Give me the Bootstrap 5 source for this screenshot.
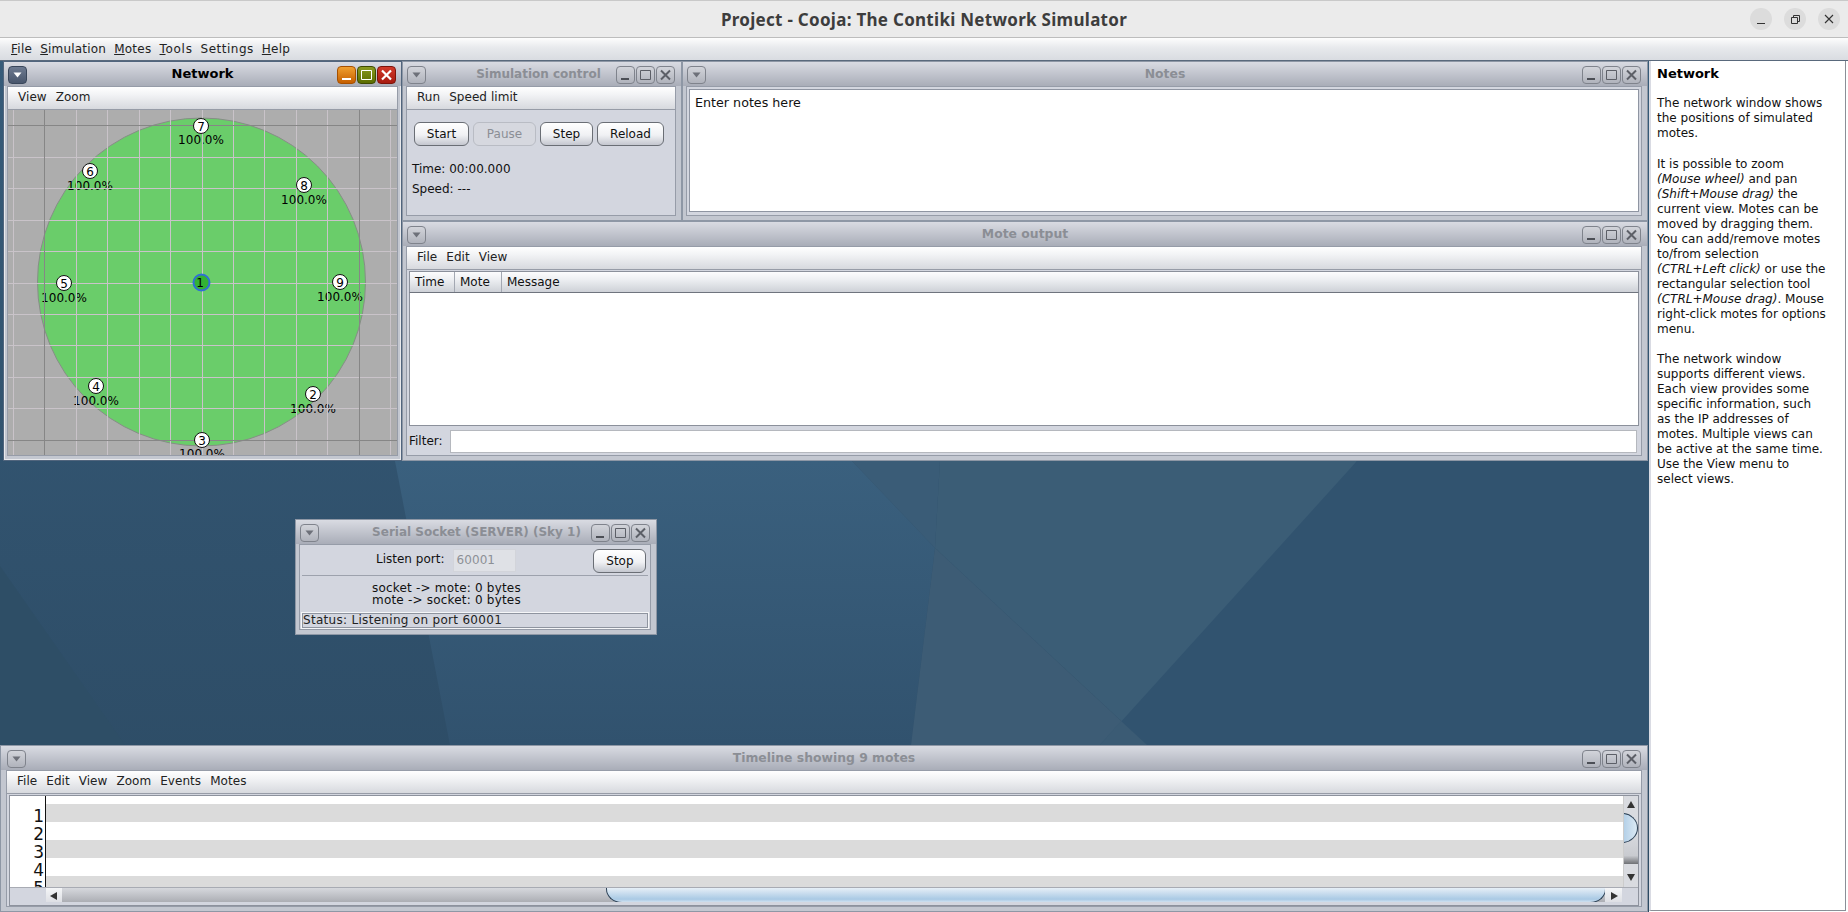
<!doctype html>
<html lang="en"><head><meta charset="utf-8"><title>Cooja</title>
<link href="https://cdn.jsdelivr.net/npm/bootstrap@5.3.0/dist/css/bootstrap.min.css" rel="stylesheet">
<style>
html,body{margin:0;width:1848px;height:912px;overflow:hidden}
body{font-family:"DejaVu Sans",sans-serif;font-size:12px;line-height:15px;color:#111;background:#fff}
.gtitle{height:38px;background:#ebebeb;border-top:1px solid #c9c9c9;border-bottom:1px solid #bdbdbd;position:relative}
.gtitle h1{margin:0;font:700 17px/38px "Noto Sans",sans-serif;color:#3d3d3d;text-align:center;letter-spacing:.28px}
.gctl{position:absolute;right:8px;top:7px;gap:12px}
.gbtn{width:22px;height:22px;border-radius:50%;background:#dcdcdc}
.gbtn svg{display:block}
.mainmenu{height:23px;background:linear-gradient(#fdfdfd,#e7e9ec 45%,#d9dce1);padding-left:11px;gap:8px;line-height:23px;border-bottom:1px solid #59697c;color:#222;letter-spacing:.27px}
.mainmenu span:nth-child(2){letter-spacing:.2px}
.mainmenu span:nth-child(4){letter-spacing:.7px}
.mainmenu span:nth-child(5){letter-spacing:.5px}
.workspace{height:851px}
.desk{width:1649px;height:851px;position:relative;overflow:hidden;background:#32546f;flex:none}
.wall{position:absolute;left:0;top:0}
.win{position:absolute;background:#c3c7d0;border:1px solid #8e97a5;padding:0 5px 4px 3px}
.win.active{border:1px solid #51657d;outline:1px solid #e8e9ec;outline-offset:-2px;padding-right:3px}
.tbar{height:24px;background:linear-gradient(#d9dbe2,#a9adb8);margin:0 -5px 0 -3px;padding:4px 6px 2px 4px;position:relative;flex:none}
.active .tbar{margin-right:-3px;padding-right:5px}
.ttext{position:absolute;left:0;right:0;top:4px;text-align:center;font-weight:700;color:#8b8e95;font-size:12.4px;line-height:16px;white-space:nowrap}
.active .ttext{color:#000;font-size:13px}
.ttext.tt-sim{left:-7px;font-size:12px}
.ttext.tt-sock{left:1px;font-size:12px}
.ibtn{width:19px;height:18px;border:1px solid #7f838c;border-radius:4px;background:linear-gradient(#d2d4da,#b0b3bc);flex:none}
.ibtn svg{display:block}
.ib-menu{background:linear-gradient(#6d7a90,#49566c);border-color:#39465a}
.ib-min{background:linear-gradient(#f0a030,#c65f00);border-color:#a65000}
.ib-max{background:linear-gradient(#8a9a20,#5b6d00);border-color:#3f4b00}
.ib-close{background:linear-gradient(#d23a2a,#a81b10);border-color:#7d130a}
.wbtns{gap:1px;position:relative}
.wbody{background:#d3d6df;border:1px solid #969ca8;min-height:0;flex:1 1 auto;overflow:hidden}
.submenu{height:23px;flex:none;background:linear-gradient(#fff,#f2f3f5 35%,#d7d9de);border-bottom:1px solid #979ca7;padding-left:10px;gap:9px;line-height:21px;color:#222;letter-spacing:.05px}
.ctlbtn{font-size:12px;line-height:15px;padding:3px 0;height:24px;border:1px solid #6a6e75;border-radius:6px;background:linear-gradient(#fff,#f0f1f4 55%,#c4c7cf);color:#111;flex:none;text-align:center}
.ctlbtn.off,.ctlbtn:disabled{border-color:#b9bcc4;background:#d6d8df;color:#8b8e95;opacity:1}
.b-start{width:55px}.b-pause{width:63px}.b-step{width:53px}.b-reload{width:67px}.b-stop{width:53px}
.ctlrow{padding:12px 0 0 7px;gap:4px}
.statgap{height:13px}
.stat{padding-left:5px;height:20px;line-height:20px}
.net{display:block;flex:none}
.net text{font-family:"DejaVu Sans",sans-serif;font-size:12px;fill:#000}
.notes{margin:2px 2px 3px;background:#fff;border:1px solid #8f95a2;padding:5px 5px;flex:1 1 auto;font-size:12.7px}
.tblhead{height:22px;flex:none;background:linear-gradient(#fcfcfd,#eceef1 40%,#ced1d7);border:1px solid #8b909b;border-bottom:1px solid #6f747e;margin:1px 2px 0 2px}
.tblhead span{padding:0 5px;border-right:1px solid #a3a8b2;line-height:20px}
.tblhead .c-time{width:45px}.tblhead .c-mote{width:47px}
.tblbody{background:#fff;flex:1 1 auto;margin:0 2px 0 2px;border:1px solid #8b909b;border-top:0}
.filter{height:29px;flex:none;padding:2px 0 0 2px;gap:7px}
.filter input{height:23px;width:1187px;border:1px solid #b5b8be;background:#fff;border-radius:0;padding:0;display:block}
.sockrow{height:31px;flex:none;border-bottom:1px solid #9da2ad;margin:0 2px;padding:4px 4px 0 0;white-space:nowrap}
.lbl{padding:3px 0 0 74px;flex:none}
.port{width:63px;height:23px;flex:none;background:#dfe1e6;border:1px solid #d2d4da;color:#8d9096;padding:3px 2px;margin:0 77px 0 9px;letter-spacing:.1px}
.sockinfo{line-height:11.5px;padding:7px 0 0 72px;height:36px;flex:none;letter-spacing:.2px}
.status{margin:0 1px;height:17px;border:1px solid #f5f6f8;outline:1px solid #8e949f;outline-offset:-2px;line-height:15px;color:#222;white-space:nowrap;padding-left:1px;letter-spacing:.3px}
.w-net{left:3px;top:0;width:399px;height:400px}
.w-sim{left:402px;top:0;width:280px;height:160px}
.w-notes{left:682px;top:0;width:966px;height:160px}
.w-out{left:402px;top:160px;width:1246px;height:240px}
.w-sock{left:295px;top:458px;width:362px;height:116px}
.w-time{left:0;top:684px;width:1648px;height:167px;padding-left:5px}
.w-time .tbar{margin-left:-5px;padding-left:6px}
.tlbody{margin:1px 2px 0 2px;border:1px solid #8d929d;background:#d3d6df;flex:1 1 auto;min-height:0}
.tllabels{width:36px;background:#fff;border-right:1px solid #111;text-align:right;font-size:17px;line-height:18px;height:91px;overflow:hidden;padding-top:11px;flex:none}
.tllabels div{padding-right:1px;color:#111}
.tlrows{width:1577px;height:91px;background:#fff;padding-top:8px;overflow:hidden;flex:none}
.stripe{height:18px;background:#dbdbdb}
.stripe.w{background:#fff}
.vsb{width:15px;height:91px;background:#d9dbe0;position:relative;flex:none;overflow:hidden;border-left:1px solid #ccc}
.hsb{height:15px;position:relative;overflow:hidden;border-top:1px solid #a8abb3;background:#d3d6df}
.hleft{position:absolute;left:36px;width:17px;top:0;height:15px;background:linear-gradient(#f4f5f7,#dcdee3)}
.hright{position:absolute;right:16px;width:17px;top:0;height:15px;background:linear-gradient(#f4f5f7,#dcdee3)}
.track{position:absolute;left:52px;right:32px;top:0;height:15px;background:linear-gradient(#d6d8dd,#a9abb1)}
.vtrack{position:absolute;left:0;top:40px;right:0;height:28px;background:linear-gradient(#d6d8dd,#c9cbd0 70%,#6f7175)}
.hthumb{position:absolute;left:544px;right:0;top:0;height:15px;background:linear-gradient(#e6eff7,#a9c9e4 80%,#cfe0ef);border:1px solid #2d4257;border-top:0;border-radius:0 0 16px 16px/0 0 14px 14px}
.vthumb{position:absolute;left:-4px;top:17px;width:18px;height:30px;background:linear-gradient(90deg,#a9c9e4,#dbe9f4);border:1px solid #2d4257;border-left:0;border-radius:0 16px 16px 0/0 15px 15px 0;z-index:1}
.arrow{position:absolute;width:0;height:0;border-style:solid;border-color:transparent}
.a-up{left:3px;top:5px;border-width:0 4px 7px;border-bottom-color:#333}
.a-down{left:3px;top:78px;border-width:7px 4px 0;border-top-color:#333}
.a-left{left:40px;top:4px;border-width:4px 7px 4px 0;border-right-color:#333}
.a-right{right:20px;top:4px;border-width:4px 0 4px 7px;border-left-color:#333}
.help{width:197px;height:850px;background:#fff;border:1px solid #8a8f97;border-width:0 1px 1px 1px;border-left-color:#d9dbe3;border-left-width:2px;padding:5px 6px;line-height:15px;color:#111;flex:none;white-space:nowrap}
.help h2{font-size:13px;line-height:15px;font-weight:700;margin:0 0 15px;color:#000}
.help p{margin:0 0 15px}
.help p+p{margin-top:16px}
.help p+p+p{margin-top:15px}
u{text-underline-offset:1px}
</style></head>
<body>
<header class="gtitle"><h1>Project - Cooja: The Contiki Network Simulator</h1>
<div class="gctl d-flex">
<div class="gbtn"><svg width="22" height="22"><path d="M7 15.500h8" stroke="#333"/></svg></div>
<div class="gbtn"><svg width="22" height="22" fill="none" stroke="#333"><path d="M7.500 9.500h6v6h-6zM9.500 9.500v-2h6v6h-2"/></svg></div>
<div class="gbtn"><svg width="22" height="22" stroke="#333" stroke-width="1.100"><path d="M7 7l8 8M15 7l-8 8"/></svg></div>
</div></header>
<nav class="mainmenu d-flex"><span><u>F</u>ile</span><span><u>S</u>imulation</span><span><u>M</u>otes</span><span><u>T</u>ools</span><span>Settings</span><span><u>H</u>elp</span></nav>
<div class="workspace d-flex">
<main class="desk">
<svg class="wall" width="1649" height="851" viewBox="0 0 1649 851">
<defs>
<linearGradient id="ga" x1="0" y1="0" x2="0" y2="1"><stop offset="0" stop-color="#365b79"/><stop offset="1" stop-color="#2c4a63"/></linearGradient>
<linearGradient id="gb" x1="0" y1="0" x2="0" y2="1"><stop offset="0" stop-color="#3a607e"/><stop offset="1" stop-color="#31526e"/></linearGradient>
</defs>
<rect width="1649" height="851" fill="url(#ga)"/>
<polygon points="0,505 125,684 0,684" fill="#2e4e66"/>
<polygon points="395,400 852,400 935,487 911,684 450,684" fill="url(#gb)"/>
<polygon points="852,400 940,400 935,487" fill="#3a5c77"/>
<polygon points="940,400 1357,400 1147,684 935,487" fill="#3b5d76"/>
<polygon points="935,487 1147,684 911,684" fill="#3d5c75"/>
<polygon points="1357,400 1649,400 1649,684 1100,684" fill="#31536f"/>
<polygon points="1121,660 1147,684 1100,684" fill="#3b5b74"/>
</svg>

<section class="win active w-net d-flex flex-column">
<div class="tbar d-flex justify-content-between"><span class="ttext">Network</span>
<div class="ibtn ib-menu"><svg width="17" height="16"><path d="M4.500 5.500h8l-4 5z" fill="#fff"/></svg></div>
<div class="wbtns d-flex">
<div class="ibtn ib-min"><svg width="17" height="16"><path d="M4 12h9" stroke="#fff" stroke-width="2"/></svg></div>
<div class="ibtn ib-max"><svg width="17" height="16"><path d="M3.500 3.500h10v9h-10z" fill="none" stroke="#fff"/></svg></div>
<div class="ibtn ib-close"><svg width="17" height="16"><path d="M4 3.500l9 9M13 3.500l-9 9" stroke="#fff" stroke-width="2.200"/></svg></div>
</div></div>
<div class="wbody d-flex flex-column">
<div class="submenu d-flex"><span>View</span><span>Zoom</span></div>
<svg class="net" width="389" height="346" viewBox="8 110 389 346">
<rect x="8" y="110" width="389" height="346" fill="#adadad"/>
<circle cx="201.500" cy="282" r="164" fill="#6acd6a" stroke="#868e86"/>
<g text-anchor="middle">
<text x="201" y="144">100.0%</text><text x="90" y="190">100.0%</text><text x="304" y="204">100.0%</text>
<text x="64" y="302">100.0%</text><text x="340" y="301">100.0%</text><text x="96" y="405">100.0%</text>
<text x="313" y="413">100.0%</text><text x="202" y="458">100.0%</text>
</g>
<g stroke="#c9c3c9"><path d="M13.500 110v346M76.500 110v346M107.500 110v346M139.500 110v346M170.500 110v346M202.500 110v346M233.500 110v346M264.500 110v346M296.500 110v346M327.500 110v346M390.500 110v346"/><path d="M8 157.500h389M8 188.500h389M8 220.500h389M8 251.500h389M8 283.500h389M8 314.500h389M8 345.500h389M8 377.500h389M8 408.500h389"/></g>
<g stroke="#868686"><path d="M44.500 110v346M359.500 110v346M8 125.500h389M8 440.500h389"/></g>
<g fill="#fff" stroke="#111">
<circle cx="201" cy="126" r="7.500"/><circle cx="90" cy="171" r="7.500"/><circle cx="304" cy="185" r="7.500"/><circle cx="64" cy="283" r="7.500"/><circle cx="340" cy="282" r="7.500"/><circle cx="96" cy="386" r="7.500"/><circle cx="313" cy="394" r="7.500"/><circle cx="202" cy="440" r="7.500"/>
</g>
<circle cx="201.500" cy="282.500" r="8" fill="#33b233" stroke="#2f6fd6" stroke-width="2"/>
<g text-anchor="middle">
<text x="201" y="130.500">7</text><text x="90" y="175.500">6</text><text x="304" y="189.500">8</text><text x="64" y="287.500">5</text><text x="200" y="287">1</text><text x="340" y="286.500">9</text><text x="96" y="390.500">4</text><text x="313" y="398.500">2</text><text x="202" y="444.500">3</text>
</g>
</svg>
</div></section>

<section class="win w-sim d-flex flex-column">
<div class="tbar d-flex justify-content-between"><span class="ttext tt-sim">Simulation control</span>
<div class="ibtn"><svg width="17" height="16"><path d="M4.500 5.500h8l-4 5z" fill="#6d7079"/></svg></div>
<div class="wbtns d-flex"><div class="ibtn"><svg width="17" height="16"><path d="M4 12h8" stroke="#4c4f56" stroke-width="2"/></svg></div><div class="ibtn"><svg width="17" height="16"><path d="M3.500 3.500h10v9h-10z" fill="none" stroke="#5c5f67"/></svg></div><div class="ibtn"><svg width="17" height="16"><path d="M4 3.500l9 9M13 3.500l-9 9" stroke="#5c5f67" stroke-width="2"/></svg></div></div>
</div>
<div class="wbody d-flex flex-column">
<div class="submenu d-flex"><span>Run</span><span>Speed limit</span></div>
<div class="ctlrow d-flex">
<button class="btn ctlbtn b-start">Start</button><button class="btn ctlbtn b-pause" disabled>Pause</button><button class="btn ctlbtn b-step">Step</button><button class="btn ctlbtn b-reload">Reload</button>
</div>
<div class="statgap"></div>
<div class="stat">Time: 00:00.000</div><div class="stat">Speed: ---</div>
</div></section>

<section class="win w-notes d-flex flex-column">
<div class="tbar d-flex justify-content-between"><span class="ttext">Notes</span>
<div class="ibtn"><svg width="17" height="16"><path d="M4.500 5.500h8l-4 5z" fill="#6d7079"/></svg></div>
<div class="wbtns d-flex"><div class="ibtn"><svg width="17" height="16"><path d="M4 12h8" stroke="#4c4f56" stroke-width="2"/></svg></div><div class="ibtn"><svg width="17" height="16"><path d="M3.500 3.500h10v9h-10z" fill="none" stroke="#5c5f67"/></svg></div><div class="ibtn"><svg width="17" height="16"><path d="M4 3.500l9 9M13 3.500l-9 9" stroke="#5c5f67" stroke-width="2"/></svg></div></div>
</div>
<div class="wbody d-flex flex-column"><div class="notes">Enter notes here</div></div>
</section>

<section class="win w-out d-flex flex-column">
<div class="tbar d-flex justify-content-between"><span class="ttext">Mote output</span>
<div class="ibtn"><svg width="17" height="16"><path d="M4.500 5.500h8l-4 5z" fill="#6d7079"/></svg></div>
<div class="wbtns d-flex"><div class="ibtn"><svg width="17" height="16"><path d="M4 12h8" stroke="#4c4f56" stroke-width="2"/></svg></div><div class="ibtn"><svg width="17" height="16"><path d="M3.500 3.500h10v9h-10z" fill="none" stroke="#5c5f67"/></svg></div><div class="ibtn"><svg width="17" height="16"><path d="M4 3.500l9 9M13 3.500l-9 9" stroke="#5c5f67" stroke-width="2"/></svg></div></div>
</div>
<div class="wbody d-flex flex-column">
<div class="submenu d-flex"><span>File</span><span>Edit</span><span>View</span></div>
<div class="tblhead d-flex"><span class="c-time">Time</span><span class="c-mote">Mote</span><span class="border-0">Message</span></div>
<div class="tblbody"></div>
<div class="filter d-flex align-items-center"><label>Filter:</label><input type="text" aria-label="Filter"></div>
</div></section>

<section class="win w-sock d-flex flex-column">
<div class="tbar d-flex justify-content-between"><span class="ttext tt-sock">Serial Socket (SERVER) (Sky 1)</span>
<div class="ibtn"><svg width="17" height="16"><path d="M4.500 5.500h8l-4 5z" fill="#6d7079"/></svg></div>
<div class="wbtns d-flex"><div class="ibtn"><svg width="17" height="16"><path d="M4 12h8" stroke="#4c4f56" stroke-width="2"/></svg></div><div class="ibtn"><svg width="17" height="16"><path d="M3.500 3.500h10v9h-10z" fill="none" stroke="#5c5f67"/></svg></div><div class="ibtn"><svg width="17" height="16"><path d="M4 3.500l9 9M13 3.500l-9 9" stroke="#5c5f67" stroke-width="2"/></svg></div></div>
</div>
<div class="wbody d-flex flex-column">
<div class="sockrow d-flex align-items-start"><span class="lbl">Listen port:</span><div class="port">60001</div><button class="btn ctlbtn b-stop">Stop</button></div>
<div class="sockinfo">socket -&gt; mote: 0 bytes<br>mote -&gt; socket: 0 bytes</div>
<div class="status">Status: Listening on port 60001</div>
</div></section>

<section class="win w-time d-flex flex-column">
<div class="tbar d-flex justify-content-between"><span class="ttext">Timeline showing 9 motes</span>
<div class="ibtn"><svg width="17" height="16"><path d="M4.500 5.500h8l-4 5z" fill="#6d7079"/></svg></div>
<div class="wbtns d-flex"><div class="ibtn"><svg width="17" height="16"><path d="M4 12h8" stroke="#4c4f56" stroke-width="2"/></svg></div><div class="ibtn"><svg width="17" height="16"><path d="M3.500 3.500h10v9h-10z" fill="none" stroke="#5c5f67"/></svg></div><div class="ibtn"><svg width="17" height="16"><path d="M4 3.500l9 9M13 3.500l-9 9" stroke="#5c5f67" stroke-width="2"/></svg></div></div>
</div>
<div class="wbody d-flex flex-column">
<div class="submenu d-flex"><span>File</span><span>Edit</span><span>View</span><span>Zoom</span><span>Events</span><span>Motes</span></div>
<div class="tlbody">
<div class="d-flex">
<div class="tllabels"><div>1</div><div>2</div><div>3</div><div>4</div><div>5</div></div>
<div class="tlrows"><div class="stripe"></div><div class="stripe w"></div><div class="stripe"></div><div class="stripe w"></div><div class="stripe"></div></div>
<div class="vsb"><span class="arrow a-up"></span><div class="vtrack"></div><div class="vthumb"></div><span class="arrow a-down"></span></div>
</div>
<div class="hsb"><div class="hleft"></div><span class="arrow a-left"></span><div class="track"><div class="hthumb"></div></div><div class="hright"></div><span class="arrow a-right"></span></div>
</div>
</div></section>
</main>
<aside class="help">
<h2>Network</h2>
<p>The network window shows<br>the positions of simulated<br>motes.</p>
<p>It is possible to zoom<br><i>(Mouse wheel)</i> and pan<br><i>(Shift+Mouse drag)</i> the<br>current view. Motes can be<br>moved by dragging them.<br>You can add/remove motes<br>to/from selection<br><i>(CTRL+Left click)</i> or use the<br>rectangular selection tool<br><i>(CTRL+Mouse drag)</i>. Mouse<br>right-click motes for options<br>menu.</p>
<p>The network window<br>supports different views.<br>Each view provides some<br>specific information, such<br>as the IP addresses of<br>motes. Multiple views can<br>be active at the same time.<br>Use the View menu to<br>select views.</p>
</aside>
</div>
<script src="https://cdn.jsdelivr.net/npm/bootstrap@5.3.0/dist/js/bootstrap.bundle.min.js"></script>
</body></html>
